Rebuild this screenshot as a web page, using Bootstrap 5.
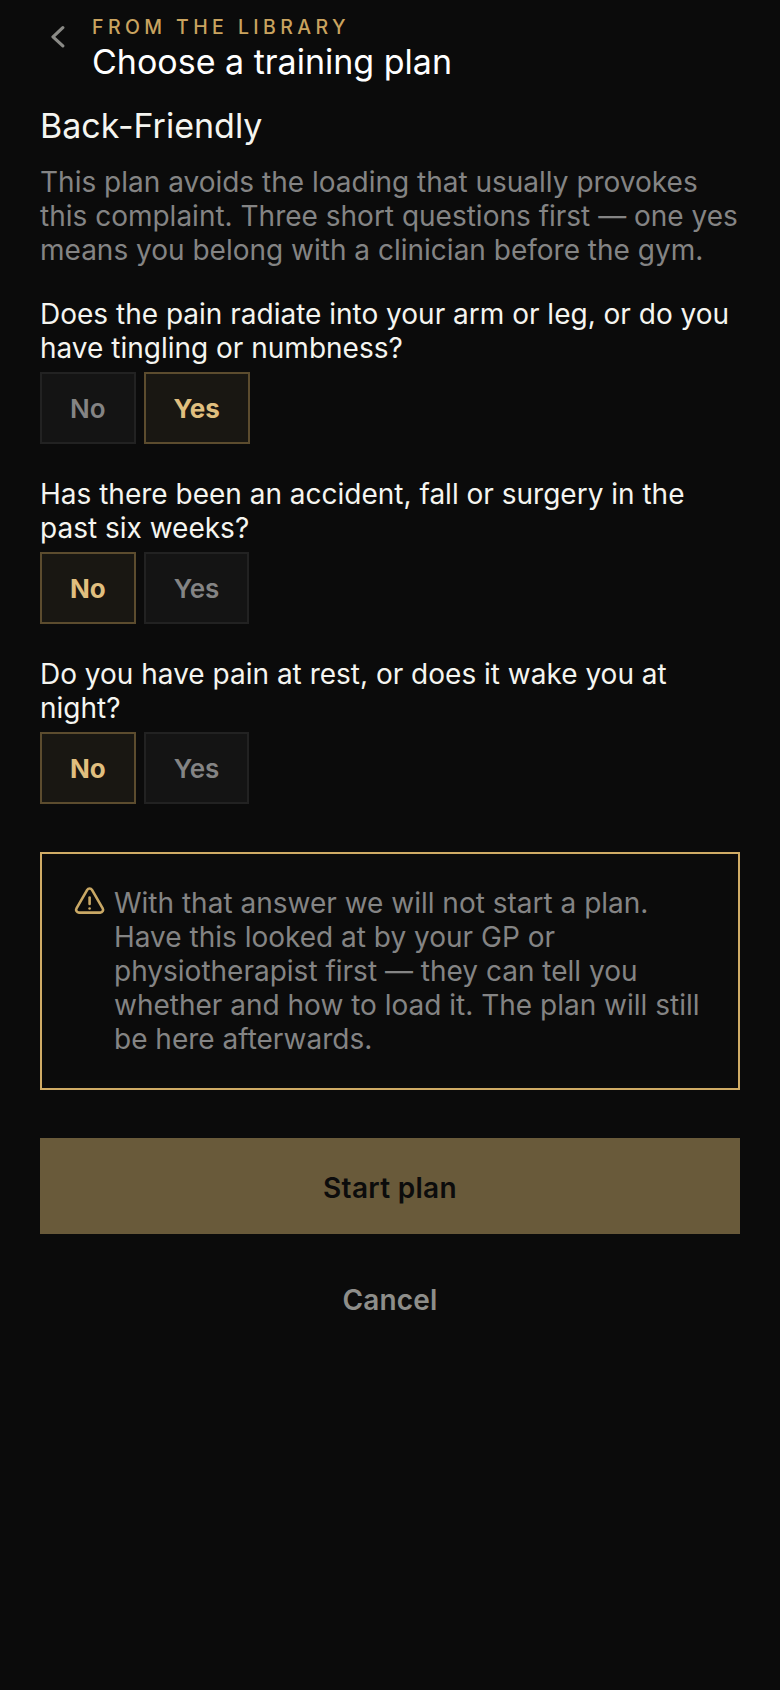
<!doctype html>
<html lang="en">
<head>
<meta charset="utf-8">
<title>Choose a training plan</title>
<link href="https://cdn.jsdelivr.net/npm/bootstrap@5.3.0/dist/css/bootstrap.min.css" rel="stylesheet">
<style>
html,body{background:#0b0b0b;height:100%}
body{font-family:Inter,"Liberation Sans",sans-serif;color:#f5f5f0;min-height:1690px}
.shell{padding:0 40px}
.topbar{height:104px;padding-top:14px}
.backbtn{width:52px;padding:0 0 0 10px;color:#8a8a86}
.backbtn svg{display:block;margin-top:10px}
.eyebrow{font-size:19.5px;line-height:26px;letter-spacing:4.4px;color:#c9a35f;font-weight:500}
.pagetitle{font-size:34px;line-height:41px;font-weight:400;color:#fff;margin:1px 0 0}
.plantitle{font-size:34px;line-height:44px;font-weight:400;color:#f5f5f0;margin:0 0 17px}
.plandesc{font-size:28px;line-height:34px;color:#848484;margin:0}
.qblock{margin-top:30px}
.qblock+.qblock{margin-top:32.6px}
.qtext{font-size:28px;line-height:34px;color:#f5f5f0;margin:0 0 7.4px}
.ansbtn{height:72px;padding:1px 28px 0;border:2px solid #222;background:#141414;color:#848484;font-size:26px;font-weight:600;border-radius:0}
.ansbtn:hover,.ansbtn:active{background:#141414!important;color:#848484!important;border-color:#222!important}
.ansbtn.picked,.ansbtn.picked:hover{border-color:#5c4c2e!important;background:#191712!important;color:#e0bf7f!important;font-weight:700}
.warnbox{margin-top:48px;border:2px solid #d0ac66;padding:32px;height:238px}
.warnicon{width:32px;height:32px;flex:none;color:#c9a865}
.warntext{font-size:28px;line-height:34px;color:#848484;margin:0 0 0 8px}
.startbtn{margin-top:48px;height:96px;padding-top:10px;width:100%;border:0;border-radius:0;background:#695a3a;color:#0c0c0c;font-size:28px;font-weight:600;letter-spacing:.3px}
.startbtn:hover,.startbtn:disabled{background:#695a3a;color:#0c0c0c;opacity:1}
.cancelbtn{margin-top:17px;height:96px;padding-top:8px;width:100%;border:0;background:transparent;color:#8e8e8a;font-size:28px;font-weight:600;letter-spacing:.2px}
.cancelbtn:hover{color:#8e8e8a;background:transparent}
</style>
</head>
<body>
<div class="shell">
  <header class="topbar d-flex align-items-start">
    <div class="backbtn flex-shrink-0">
      <svg width="15" height="26" viewBox="0 0 15 26" fill="none" stroke="currentColor" stroke-width="3.200" stroke-linecap="round" stroke-linejoin="round"><path d="M12.800 3.700 3 12.800l9.800 9.100"/></svg>
    </div>
    <div>
      <div class="eyebrow text-uppercase">From the library</div>
      <h1 class="pagetitle">Choose a training plan</h1>
    </div>
  </header>

  <h2 class="plantitle">Back-Friendly</h2>
  <p class="plandesc">This plan avoids the loading that usually provokes this complaint. Three short questions first — one yes means you belong with a clinician before the gym.</p>

  <section class="qblock">
    <p class="qtext">Does the pain radiate into your arm or leg, or do you have tingling or numbness?</p>
    <div class="d-flex gap-2">
      <button type="button" class="btn ansbtn">No</button>
      <button type="button" class="btn ansbtn picked">Yes</button>
    </div>
  </section>
  <section class="qblock">
    <p class="qtext">Has there been an accident, fall or surgery in the past six weeks?</p>
    <div class="d-flex gap-2">
      <button type="button" class="btn ansbtn picked">No</button>
      <button type="button" class="btn ansbtn">Yes</button>
    </div>
  </section>
  <section class="qblock">
    <p class="qtext">Do you have pain at rest, or does it wake you at night?</p>
    <div class="d-flex gap-2">
      <button type="button" class="btn ansbtn picked">No</button>
      <button type="button" class="btn ansbtn">Yes</button>
    </div>
  </section>

  <div class="warnbox d-flex align-items-start">
    <svg class="warnicon" viewBox="0 0 32 32" fill="none" stroke="currentColor" stroke-width="2.600" stroke-linecap="round" stroke-linejoin="round"><path d="M13.200 3.800 2.500 22.400A2.800 2.800 0 0 0 4.900 26.600h21.400a2.800 2.800 0 0 0 2.400-4.200L18 3.800a2.800 2.800 0 0 0-4.800 0z"/><path d="M15.600 11.500v6.500"/><path d="M15.600 22.500h.01"/></svg>
    <p class="warntext">With that answer we will not start a plan. Have this looked at by your GP or physiotherapist first — they can tell you whether and how to load it. The plan will still be here afterwards.</p>
  </div>

  <button type="button" class="btn startbtn d-block">Start plan</button>
  <button type="button" class="btn cancelbtn d-block">Cancel</button>
</div>
<script src="https://cdn.jsdelivr.net/npm/bootstrap@5.3.0/dist/js/bootstrap.bundle.min.js"></script>
</body>
</html>
